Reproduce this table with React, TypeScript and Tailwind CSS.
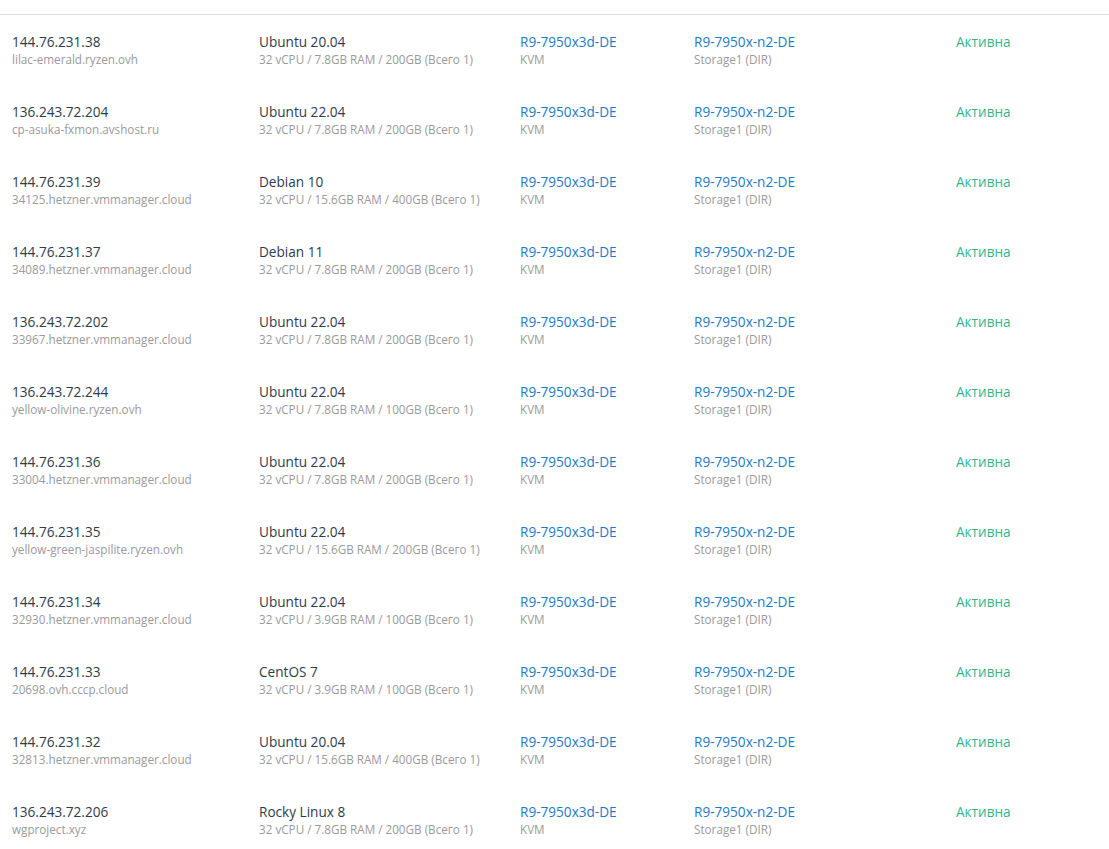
const rows = [
  { ip: "144.76.231.38", host: "lilac-emerald.ryzen.ovh", os: "Ubuntu 20.04", spec: "32 vCPU / 7.8GB RAM / 200GB (Всего 1)" },
  { ip: "136.243.72.204", host: "cp-asuka-fxmon.avshost.ru", os: "Ubuntu 22.04", spec: "32 vCPU / 7.8GB RAM / 200GB (Всего 1)" },
  { ip: "144.76.231.39", host: "34125.hetzner.vmmanager.cloud", os: "Debian 10", spec: "32 vCPU / 15.6GB RAM / 400GB (Всего 1)" },
  { ip: "144.76.231.37", host: "34089.hetzner.vmmanager.cloud", os: "Debian 11", spec: "32 vCPU / 7.8GB RAM / 200GB (Всего 1)" },
  { ip: "136.243.72.202", host: "33967.hetzner.vmmanager.cloud", os: "Ubuntu 22.04", spec: "32 vCPU / 7.8GB RAM / 200GB (Всего 1)" },
  { ip: "136.243.72.244", host: "yellow-olivine.ryzen.ovh", os: "Ubuntu 22.04", spec: "32 vCPU / 7.8GB RAM / 100GB (Всего 1)" },
  { ip: "144.76.231.36", host: "33004.hetzner.vmmanager.cloud", os: "Ubuntu 22.04", spec: "32 vCPU / 7.8GB RAM / 200GB (Всего 1)" },
  { ip: "144.76.231.35", host: "yellow-green-jaspilite.ryzen.ovh", os: "Ubuntu 22.04", spec: "32 vCPU / 15.6GB RAM / 200GB (Всего 1)" },
  { ip: "144.76.231.34", host: "32930.hetzner.vmmanager.cloud", os: "Ubuntu 22.04", spec: "32 vCPU / 3.9GB RAM / 100GB (Всего 1)" },
  { ip: "144.76.231.33", host: "20698.ovh.cccp.cloud", os: "CentOS 7", spec: "32 vCPU / 3.9GB RAM / 100GB (Всего 1)" },
  { ip: "144.76.231.32", host: "32813.hetzner.vmmanager.cloud", os: "Ubuntu 20.04", spec: "32 vCPU / 15.6GB RAM / 400GB (Всего 1)" },
  { ip: "136.243.72.206", host: "wgproject.xyz", os: "Rocky Linux 8", spec: "32 vCPU / 7.8GB RAM / 200GB (Всего 1)" },
];

function Cell({ main, sub, mainClass }: { main: string; sub: string; mainClass: string }) {
  return (
    <div className="flex flex-col">
      <span className={`text-[13.6px] leading-[18px] ${mainClass}`}>{main}</span>
      <span className="text-[11.7px] leading-[16px] text-[#9a9a9a]">{sub}</span>
    </div>
  );
}

export default function App() {
  return (
    <div className="w-[1109px] h-[849px] overflow-hidden bg-white font-['Open_Sans',sans-serif]">
      <div className="h-[15px] border-b border-[#dedede]" />
      {rows.map((r) => (
        <div key={r.ip + r.host} className="grid grid-cols-[247px_261px_174px_262px_1fr] items-center h-[70px] pl-3">
          <Cell main={r.ip} sub={r.host} mainClass="text-[#2f3b4c]" />
          <Cell main={r.os} sub={r.spec} mainClass="text-[#2f3b4c]" />
          <Cell main="R9-7950x3d-DE" sub="KVM" mainClass="text-[#1a7cc7]" />
          <Cell main="R9-7950x-n2-DE" sub="Storage1 (DIR)" mainClass="text-[#1a7cc7]" />
          <div className="flex flex-col">
            <span className="text-[13.6px] leading-[18px] text-[#33b58c]">Активна</span>
            <span className="text-[11.7px] leading-[16px]">&nbsp;</span>
          </div>
        </div>
      ))}
    </div>
  );
}
